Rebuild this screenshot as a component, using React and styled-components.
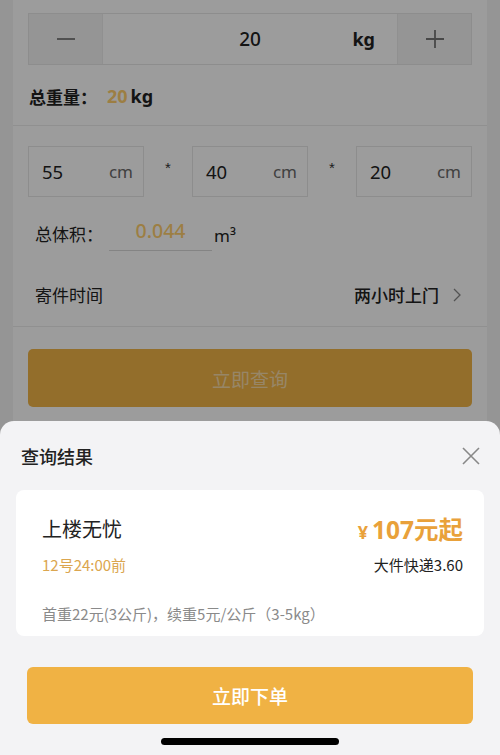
import React from "react";
import styled, { createGlobalStyle } from "styled-components";

const Global = createGlobalStyle`
  html, body { margin: 0; padding: 0; }
  body {
    font-family: "Noto Sans CJK SC", "Noto Sans", "Liberation Sans", sans-serif;
    color: #222;
    background: #f4f4f4;
  }
  * { box-sizing: border-box; }
`;

const Screen = styled.div`
  position: relative;
  width: 500px;
  height: 755px;
  overflow: hidden;
  background: #f4f4f4;
`;

const Page = styled.div`
  margin: 0 13px;
  height: 100%;
  background: #ffffff;
`;

const Section = styled.div`
  padding: ${(p) => p.$pad || "0 15px"};
  border-bottom: ${(p) => (p.$line ? "1px solid #ececec" : "none")};
`;

const Stepper = styled.div`
  display: flex;
  height: 52px;
  border: 1px solid #e6e6e6;
`;

const StepBtn = styled.div`
  width: 74px;
  flex: none;
  display: flex;
  align-items: center;
  justify-content: center;
  background: #f4f4f4;
  border-${(p) => (p.$side === "left" ? "right" : "left")}: 1px solid #ececec;
`;

const StepValue = styled.div`
  flex: 1;
  display: grid;
  grid-template-columns: 1fr auto 1fr;
  align-items: center;
  background: #fff;
`;

const Num = styled.span`
  grid-column: 2;
  font-family: "Noto Sans", "Liberation Sans", sans-serif;
  font-size: 19px;
  font-weight: 500;
  color: #222;
`;

const StepUnit = styled.span`
  grid-column: 3;
  justify-self: end;
  padding-right: 22px;
  font-family: "Noto Sans", "Liberation Sans", sans-serif;
  font-size: 18px;
  font-weight: 700;
  color: #222;
`;

const TotalLine = styled.div`
  margin-top: 19px;
  height: 24px;
  display: flex;
  align-items: center;
  font-size: 17px;
  font-weight: 700;
  padding-left: 1px;
`;

const Gold = styled.span`
  font-family: "Noto Sans", "Liberation Sans", sans-serif;
  font-size: ${(p) => p.$size || 18}px;
  font-weight: ${(p) => p.$weight || 700};
  color: #ffcf6e;
  margin-left: ${(p) => p.$ml || 0}px;
`;

const Unit = styled.span`
  font-family: "Noto Sans", "Liberation Sans", sans-serif;
  font-size: 18px;
  font-weight: 700;
  margin-left: 3px;
`;

const DimRow = styled.div`
  display: grid;
  grid-template-columns: 116px 1fr 116px 1fr 116px;
  align-items: center;
`;

const DimBox = styled.div`
  height: 51px;
  border: 1px solid #e6e6e6;
  display: flex;
  align-items: center;
  justify-content: space-between;
  padding: 0 10px 0 13px;
  font-family: "Noto Sans", "Liberation Sans", sans-serif;
`;

const DimVal = styled.span`
  font-size: 18.5px;
  color: #222;
`;

const DimUnit = styled.span`
  font-size: 17px;
  color: #6a6a6a;
`;

const Star = styled.span`
  justify-self: center;
  font-family: "Liberation Sans", sans-serif;
  font-size: 15px;
  color: #333;
  margin-top: -8px;
`;

const VolumeRow = styled.div`
  margin-top: 18px;
  display: flex;
  align-items: center;
  padding-left: 7px;
  font-size: 17px;
`;

const VolInput = styled.div`
  width: 103px;
  height: 36px;
  margin-left: 6px;
  display: flex;
  align-items: center;
  justify-content: center;
  border-bottom: 1px solid #d8d8d8;
  padding-bottom: 4px;
`;

const Cube = styled.span`
  font-family: "Noto Sans", "Liberation Sans", sans-serif;
  font-size: 17px;
  margin-left: 2px;
  margin-top: 4px;
`;

const TimeRow = styled.div`
  height: 64px;
  margin-top: 12px;
  display: flex;
  align-items: center;
  justify-content: space-between;
  padding: 0 26px 0 22px;
  border-bottom: 1px solid #ececec;
  font-size: 17px;
`;

const TimeVal = styled.span`
  display: flex;
  align-items: center;
  gap: 14px;
  font-weight: 500;
`;

const QueryBtn = styled.div`
  margin: 22px 15px 0;
  height: 58px;
  border-radius: 5px;
  background: #f0b447;
  display: flex;
  align-items: center;
  justify-content: center;
  font-size: 19px;
  color: rgba(255, 255, 255, 0.55);
`;

const Mask = styled.div`
  position: absolute;
  inset: 0;
  background: rgba(0, 0, 0, 0.39);
`;

const Sheet = styled.div`
  position: absolute;
  left: 0;
  right: 0;
  bottom: 0;
  height: 334px;
  background: #f3f3f5;
  border-radius: 14px 14px 0 0;
  display: flex;
  flex-direction: column;
`;

const SheetHeader = styled.div`
  height: 69px;
  flex: none;
  display: flex;
  align-items: center;
  justify-content: space-between;
  padding: 0 20px 0 21px;
`;

const SheetTitle = styled.span`
  font-size: 18px;
  font-weight: 500;
  color: #222;
`;

const ResultCard = styled.div`
  margin: 0 16px;
  height: 146px;
  background: #fff;
  border-radius: 8px;
  padding: 22px 21px 0 26px;
`;

const CardRow = styled.div`
  display: flex;
  align-items: center;
  justify-content: space-between;
  height: ${(p) => p.$h}px;
  margin-top: ${(p) => p.$mt || 0}px;
`;

const ServiceName = styled.span`
  font-size: 20px;
  color: #222;
`;

const Price = styled.span`
  color: #e9a13a;
  font-weight: 700;
  font-size: 24.5px;
  font-family: "Noto Sans", "Noto Sans CJK SC", sans-serif;
  display: flex;
  align-items: baseline;
`;

const Yen = styled.span`
  font-size: 18px;
  margin-right: 4px;
`;

const Deadline = styled.span`
  font-size: 15px;
  color: #dba64f;
`;

const Carrier = styled.span`
  font-size: 15px;
  color: #222;
`;

const Rule = styled.span`
  font-size: 15px;
  color: #8a8a8a;
`;

const OrderBtn = styled.div`
  margin: 31px 27px 0;
  height: 57px;
  border-radius: 6px;
  background: #f0b244;
  display: flex;
  align-items: center;
  justify-content: center;
  font-size: 19px;
  font-weight: 500;
  color: #fff;
`;

const HomeBar = styled.div`
  margin: 14px auto 0;
  width: 178px;
  height: 7px;
  border-radius: 4px;
  background: #000;
`;

const Minus = () => (
  <svg width="20" height="20" viewBox="0 0 20 20">
    <path d="M1 10h18" stroke="#777" strokeWidth="1.8" />
  </svg>
);
const Plus = () => (
  <svg width="20" height="20" viewBox="0 0 20 20">
    <path d="M1 10h18M10 1v18" stroke="#777" strokeWidth="1.8" />
  </svg>
);
const Chevron = () => (
  <svg width="8" height="14" viewBox="0 0 8 14">
    <path d="M1 1l6 6-6 6" fill="none" stroke="#888" strokeWidth="1.3" />
  </svg>
);
const Close = () => (
  <svg width="18" height="18" viewBox="0 0 18 18">
    <path d="M1 1l16 16M17 1L1 17" stroke="#888" strokeWidth="1.6" />
  </svg>
);

export default function App() {
  return (
    <Screen>
      <Global />
      <Page>
        <Section $pad="13px 15px 17px" $line>
          <Stepper>
            <StepBtn $side="left"><Minus /></StepBtn>
            <StepValue>
              <Num>20</Num>
              <StepUnit>kg</StepUnit>
            </StepValue>
            <StepBtn $side="right"><Plus /></StepBtn>
          </Stepper>
          <TotalLine>
            总重量：<Gold $ml={10}>20</Gold><Unit>kg</Unit>
          </TotalLine>
        </Section>
        <Section $pad="20px 15px 0">
          <DimRow>
            <DimBox><DimVal>55</DimVal><DimUnit>cm</DimUnit></DimBox>
            <Star>*</Star>
            <DimBox><DimVal>40</DimVal><DimUnit>cm</DimUnit></DimBox>
            <Star>*</Star>
            <DimBox><DimVal>20</DimVal><DimUnit>cm</DimUnit></DimBox>
          </DimRow>
          <VolumeRow>
            总体积：
            <VolInput><Gold $weight={500} $size={19.5}>0.044</Gold></VolInput>
            <Cube>m³</Cube>
          </VolumeRow>
        </Section>
        <TimeRow>
          <span>寄件时间</span>
          <TimeVal>两小时上门<Chevron /></TimeVal>
        </TimeRow>
        <QueryBtn>立即查询</QueryBtn>
      </Page>
      <Mask />
      <Sheet>
        <SheetHeader>
          <SheetTitle>查询结果</SheetTitle>
          <Close />
        </SheetHeader>
        <ResultCard>
          <CardRow $h={32}>
            <ServiceName>上楼无忧</ServiceName>
            <Price><Yen>¥</Yen>107元起</Price>
          </CardRow>
          <CardRow $h={20} $mt={10}>
            <Deadline>12号24:00前</Deadline>
            <Carrier>大件快递3.60</Carrier>
          </CardRow>
          <CardRow $h={20} $mt={29}>
            <Rule>首重22元(3公斤)，续重5元/公斤（3-5kg）</Rule>
          </CardRow>
        </ResultCard>
        <OrderBtn>立即下单</OrderBtn>
        <HomeBar />
      </Sheet>
    </Screen>
  );
}
